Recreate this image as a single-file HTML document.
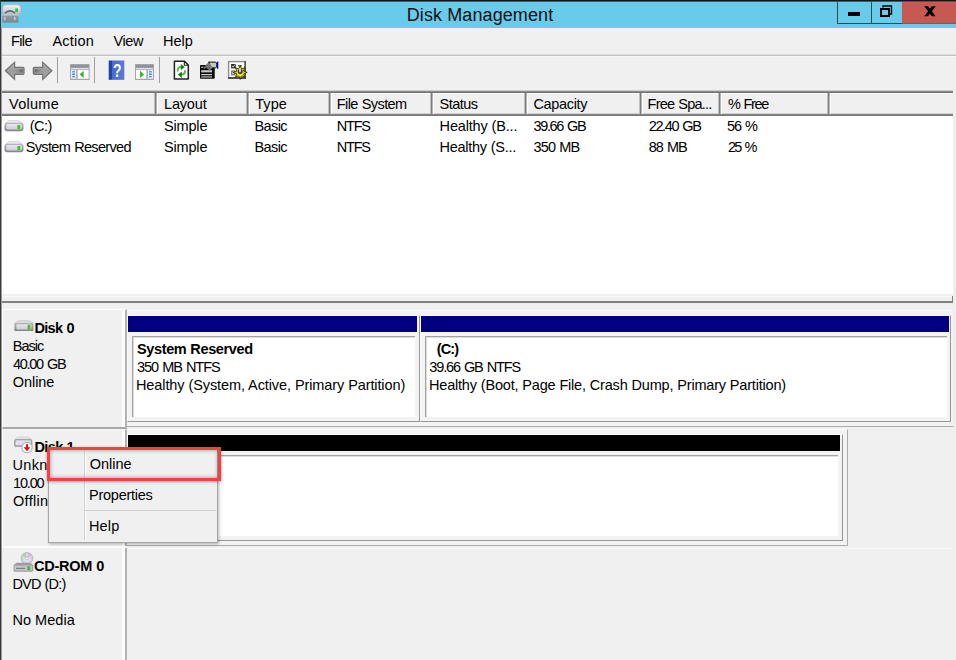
<!DOCTYPE html>
<html>
<head>
<meta charset="utf-8">
<title>Disk Management</title>
<style>
html,body{margin:0;padding:0;}
body{width:956px;height:660px;overflow:hidden;background:#f0f0f0;font-family:"Liberation Sans",sans-serif;font-size:14.5px;color:#000;}
#win{position:relative;width:956px;height:660px;overflow:hidden;background:#f0f0f0;}
.abs{position:absolute;}
.t{position:absolute;white-space:nowrap;line-height:18px;height:18px;letter-spacing:-0.15px;}
.b{font-weight:bold;}
/* title */
#topblack{left:0;top:0;width:956px;height:1px;background:#141414;border-bottom:1px solid #35606e;}
#titlebar{left:0;top:2px;width:956px;height:26px;background:#68cbea;}
#title{left:0;top:3px;width:960px;text-align:center;font-size:18px;line-height:24px;height:24px;color:#111;letter-spacing:0.1px;}
#leftedge{left:0;top:0;width:1px;height:660px;background:#383838;}
#leftedge2{left:1px;top:28px;width:1px;height:632px;background:#9c9c9c;}
.cbtn{position:absolute;top:2px;height:22px;border:1px solid #2c4a55;border-top:none;box-sizing:border-box;}
/* menu */
#menuline{left:2px;top:54px;width:954px;height:1px;background:#dedede;border-bottom:1px solid #c2c2c2;}
#menuline2{left:2px;top:56px;width:954px;height:1px;background:#f7f7f7;}
.tsep{position:absolute;top:57px;width:1px;height:26px;background:#a0a0a0;}
/* list */
#listtop{left:2px;top:90px;width:951px;height:3px;background:linear-gradient(180deg,#cdcdcd 0 1px,#8c8c8c 1px 2px,#727272 2px 3px);}
#list{left:2px;top:93px;width:951px;height:201px;background:#fff;}
#hdr{left:2px;top:93px;width:951px;height:21px;background:#f0f0f0;border-top:1px solid #fff;box-sizing:border-box;}
#hdrbot{left:2px;top:113px;width:951px;height:3px;background:linear-gradient(180deg,#d0d0d0 0 1px,#868686 1px 2px,#767676 2px 3px);}
.hd{position:absolute;top:93px;height:21px;width:4px;background:linear-gradient(90deg,#c0c0c0 0 1px,#7e7e7e 1px 2px,#b4b4b4 2px 3px,#fff 3px 4px);}
/* lower */
#splitlight{left:3px;top:296px;width:950px;height:1px;background:#fafafa;}
#splitdark{left:2px;top:301px;width:951px;height:2px;background:#808080;border-right:0;}
#splitend{left:952px;top:296px;width:1px;height:6px;background:#808080;}
.panel{position:absolute;left:2px;width:125px;background:#f0f0f0;box-sizing:border-box;border-top:1px solid #fdfdfd;border-left:1px solid #fdfdfd;border-right:2px solid #b2b2b2;border-bottom:2px solid #a8a8a8;}
.panel:after{content:"";position:absolute;right:0;top:0;bottom:0;width:3px;background:#fbfbfb;}
.rowf{position:absolute;background:#f3f3f3;box-sizing:border-box;border-top:1px solid #fafafa;border-right:1px solid #ababab;border-bottom:1px solid #ababab;}
.part{position:absolute;background:#f3f3f3;box-sizing:border-box;border-top:1px solid #fcfcfc;border-left:1px solid #fcfcfc;border-right:1px solid #969696;border-bottom:1px solid #969696;}
.navy{position:absolute;background:#000080;}
.pbox{position:absolute;background:#fff;box-sizing:border-box;border-top:1px solid #a2a2a2;border-left:1px solid #a2a2a2;box-shadow:inset 1px 1px 0 #dcdcdc;}
</style>
</head>
<body>
<div id="win">

  <!-- shared icon symbols -->
  <svg width="0" height="0" style="position:absolute">
    <defs>
      <linearGradient id="dface" x1="0" y1="0" x2="0" y2="1"><stop offset="0" stop-color="#fafafc"/><stop offset="0.3" stop-color="#dcdce6"/><stop offset="1" stop-color="#cfcfd8"/></linearGradient>
      <linearGradient id="dbody" x1="0" y1="0" x2="0" y2="1"><stop offset="0" stop-color="#b9b9bd"/><stop offset="1" stop-color="#838388"/></linearGradient>
      <symbol id="drvA" viewBox="0 0 20 12">
        <path d="M4.6 0.6 H15.4 L18.4 3.2 H1.6 Z" fill="#ececee" stroke="#c8c8cc" stroke-width="0.6"/>
        <rect x="0.5" y="2.8" width="19" height="8.4" rx="2.6" fill="url(#dbody)"/>
        <rect x="2.2" y="4.3" width="15.6" height="5.2" rx="1.4" fill="url(#dface)"/>
        <rect x="13.4" y="5" width="2.8" height="4.2" fill="#3cc328"/>
      </symbol>
      <symbol id="drvB" viewBox="0 0 20 12">
        <path d="M4.2 0.6 H15.6 L19 3.2 H0.8 Z" fill="#dcdcde" stroke="#c4c4c8" stroke-width="0.6"/>
        <path d="M0.4 3 H19.4 V11 H0.4 Z" fill="url(#dbody)"/>
        <rect x="2.4" y="4.4" width="15" height="5" rx="0.8" fill="url(#dface)"/>
        <rect x="13.6" y="4.8" width="2.8" height="4.8" fill="#3cc328"/>
      </symbol>
    </defs>
  </svg>
  <!-- title bar -->
  <div class="abs" id="titlebar"></div>
  <div class="abs" id="topblack"></div>
  <div class="abs" id="title">Disk Management</div>
  <!-- app icon -->
  <svg class="abs" style="left:2px;top:4px" width="20" height="20" viewBox="0 0 20 20">
    <defs>
      <linearGradient id="g1" x1="0" y1="0" x2="0" y2="1"><stop offset="0" stop-color="#f4f4f6"/><stop offset="1" stop-color="#b9bdc4"/></linearGradient>
      <linearGradient id="g2" x1="0" y1="0" x2="0" y2="1"><stop offset="0" stop-color="#c9d3da"/><stop offset="0.25" stop-color="#8e9aa3"/><stop offset="1" stop-color="#7c8890"/></linearGradient>
    </defs>
    <rect x="0.5" y="0.8" width="18.5" height="9.6" rx="3.5" fill="url(#g1)" stroke="#a7abb3" stroke-width="0.6"/>
    <path d="M3 9.2 Q8 4.5 13 9.2" fill="none" stroke="#5d666e" stroke-width="1.6"/>
    <rect x="13.3" y="4.4" width="2.6" height="3.6" fill="#2fc21e"/>
    <rect x="0.3" y="10.4" width="16.2" height="8.2" fill="url(#g2)"/>
    <rect x="2.2" y="13" width="1.2" height="3.2" fill="#d5dce0"/>
    <rect x="12.2" y="13" width="1.2" height="3.2" fill="#d5dce0"/>
  </svg>
  <!-- caption buttons -->
  <div class="cbtn" style="left:837px;width:35px;"></div>
  <div class="cbtn" style="left:871px;width:32px;border-left:1px solid #2c4a55;"></div>
  <div class="abs" style="left:902px;top:2px;width:54px;height:22px;background:#c75a50;box-shadow:inset 0 -1px 0 #a84a42;"></div>
  <div class="abs" style="left:848px;top:12px;width:12px;height:4px;background:#000;"></div>
  <svg class="abs" style="left:879px;top:4px" width="15" height="15" viewBox="0 0 15 15">
    <path d="M4 3.5 V2 H12.5 V10 H11" fill="none" stroke="#000" stroke-width="1.4"/>
    <rect x="2" y="5" width="8" height="7" fill="none" stroke="#000" stroke-width="2"/>
  </svg>
  <svg class="abs" style="left:923px;top:5px" width="14" height="13" viewBox="0 0 14 13">
    <path d="M1.2 1.2 H5 L12.7 11.2 H8.9 Z" fill="#000"/><path d="M12.7 1.2 H8.9 L1.2 11.2 H5 Z" fill="#000"/>
  </svg>

  <!-- menu bar -->
  <div class="t" style="left:11.1px;top:32px;letter-spacing:-0.66px;word-spacing:0.66px;">File</div>
  <div class="t" style="left:52.4px;top:32px;letter-spacing:0.21px;word-spacing:-0.21px;">Action</div>
  <div class="t" style="left:113.4px;top:32px;letter-spacing:-0.36px;word-spacing:0.36px;">View</div>
  <div class="t" style="left:162.9px;top:32px;letter-spacing:0.06px;word-spacing:-0.06px;">Help</div>
  <div class="abs" id="menuline"></div>
  <div class="abs" id="menuline2"></div>

  <!-- toolbar -->
  <svg class="abs" style="left:0;top:56px" width="260" height="34" viewBox="0 0 260 34">
    <defs>
      <linearGradient id="ga" x1="0" y1="0" x2="0" y2="1"><stop offset="0" stop-color="#b8b8b8"/><stop offset="0.5" stop-color="#9c9c9c"/><stop offset="1" stop-color="#aaaaaa"/></linearGradient>
      <linearGradient id="gb" x1="0" y1="0" x2="1" y2="0"><stop offset="0" stop-color="#8a8a8a" stop-opacity="0"/><stop offset="1" stop-color="#5e5e5e" stop-opacity="0.9"/></linearGradient>
      <linearGradient id="gc" x1="1" y1="0" x2="0" y2="0"><stop offset="0" stop-color="#8a8a8a" stop-opacity="0"/><stop offset="1" stop-color="#5e5e5e" stop-opacity="0.9"/></linearGradient>
      <linearGradient id="gh" x1="0" y1="0" x2="1" y2="0"><stop offset="0" stop-color="#2443a8"/><stop offset="0.22" stop-color="#2443a8"/><stop offset="0.23" stop-color="#4a6ad0"/><stop offset="1" stop-color="#5878dc"/></linearGradient>
    </defs>
    <!-- back arrow -->
    <path d="M5.4 14.8 L14.6 6.3 V11.3 H23 Q24 11.3 24 12.3 V17.3 Q24 18.3 23 18.3 H14.6 V23.3 Z" fill="url(#ga)" stroke="#727272" stroke-width="1.2"/>
    <rect x="14" y="13" width="8.6" height="3.6" fill="url(#gb)"/>
    <!-- forward arrow -->
    <path d="M51.9 14.8 L42.7 6.3 V11.3 H34.3 Q33.3 11.3 33.3 12.3 V17.3 Q33.3 18.3 34.3 18.3 H42.7 V23.3 Z" fill="url(#ga)" stroke="#727272" stroke-width="1.2"/>
    <rect x="34.6" y="13" width="8.6" height="3.6" fill="url(#gc)"/>
    <!-- window icon 1 -->
    <g>
      <rect x="70" y="8" width="19.6" height="16" fill="#a1a6ae"/>
      <rect x="71" y="9" width="17.6" height="2.6" fill="#8f949c"/>
      <rect x="71" y="12.2" width="17.6" height="1" fill="#f2f3f5"/>
      <rect x="71" y="14" width="5.2" height="8.8" fill="#e4ebf6"/>
      <rect x="72.2" y="15.2" width="2.8" height="1.2" fill="#4f86d8"/>
      <rect x="72.2" y="17.6" width="2.8" height="1.2" fill="#2f6fd0"/>
      <rect x="72.2" y="20" width="2.8" height="1.2" fill="#4f86d8"/>
      <rect x="77.6" y="14" width="11" height="8.8" fill="#fff"/>
      <path d="M79.6 18.4 L83.6 14.8 V22 Z" fill="#3cb521"/>
    </g>
    <!-- help icon -->
    <rect x="108.7" y="4.5" width="15.6" height="19.3" fill="url(#gh)"/>
    <text transform="translate(117.2 20.8) scale(0.8 1)" x="0" y="0" font-family="Liberation Sans, sans-serif" font-weight="bold" font-size="17.5" fill="#fff" text-anchor="middle">?</text>
    <!-- window icon 2 -->
    <g>
      <rect x="135" y="8" width="19" height="16" fill="#a1a6ae"/>
      <rect x="136" y="9" width="17" height="2.6" fill="#8f949c"/>
      <rect x="136" y="12.2" width="17" height="1" fill="#f2f3f5"/>
      <rect x="136" y="14" width="10.4" height="8.8" fill="#fff"/>
      <path d="M144.2 18.4 L140 14.8 V22 Z" fill="#3cb521"/>
      <rect x="147.8" y="14" width="5.2" height="8.8" fill="#e4ebf6"/>
      <rect x="149" y="15.2" width="2.8" height="1.2" fill="#4f86d8"/>
      <rect x="149" y="17.6" width="2.8" height="1.2" fill="#2f6fd0"/>
      <rect x="149" y="20" width="2.8" height="1.2" fill="#4f86d8"/>
    </g>
    <!-- refresh doc -->
    <path d="M174.4 5.2 H184.5 L188.3 9 V23.1 H174.4 Z" fill="#fff" stroke="#222" stroke-width="1.5" stroke-linejoin="round"/>
    <path d="M184.3 5.4 V9.2 H188.1 Z" fill="#fff" stroke="#222" stroke-width="1.1" stroke-linejoin="round"/>
    <path d="M181.2 11 Q177.5 10.8 177.6 15.4" fill="none" stroke="#45b045" stroke-width="1.7"/>
    <path d="M180.8 7.9 L184.6 11.1 L180.8 14.2 Z" fill="#078207"/>
    <path d="M181.4 18.6 Q185.1 18.8 185 14.2" fill="none" stroke="#45b045" stroke-width="1.7"/>
    <path d="M181.9 15.4 L177.9 18.6 L181.9 21.9 Z" fill="#078207"/>
    <!-- properties icon -->
    <rect x="200" y="9.1" width="14.7" height="13.6" rx="0.8" fill="#070707"/>
    <rect x="201.2" y="14.2" width="10.8" height="2.2" fill="#c9c9c9"/>
    <rect x="201.2" y="18.1" width="10.8" height="1.1" fill="#e6e6e6"/>
    <rect x="201.2" y="20.4" width="10.8" height="1.1" fill="#d0d0d0"/>
    <rect x="201" y="10.6" width="2.4" height="1.2" fill="#bdbdbd"/>
    <path d="M208.4 6.1 H215.2 Q216.9 6.1 216.9 9 Q216.9 11.9 215.2 11.9 H211.5 Z" fill="#c6c6c6" stroke="#0a0a0a" stroke-width="1"/>
    <path d="M203.4 12 L208.2 6.6 L212.6 11.4 L209.6 14.6 L206.2 11.4 L204.4 13 Z" fill="#7c7c7c"/>
    <path d="M206.4 8.6 L210.8 13.2 M205.2 10 L209.6 14.4" stroke="#5c5c5c" stroke-width="0.9"/>
    <rect x="216.9" y="5.6" width="1.4" height="7.2" fill="#0a0ab4"/>
    <!-- settings icon -->
    <rect x="228.6" y="5.6" width="16.6" height="16.4" fill="#fdfdfd" stroke="#8e8e8e" stroke-width="1.4"/>
    <rect x="244.4" y="5" width="1.6" height="17.6" fill="#555"/>
    <rect x="228" y="21.2" width="18" height="1.6" fill="#3c3c3c"/>
    <rect x="231.1" y="8" width="4.7" height="4.4" fill="#2e2e2e"/>
    <path d="M232 10 L233 11.2 L235 8.6" stroke="#ddd" stroke-width="0.9" fill="none"/>
    <rect x="238" y="9" width="4" height="1.5" fill="#777"/>
    <rect x="231.1" y="14.4" width="4.2" height="5" fill="#6e6e6e"/>
    <rect x="232.2" y="15.6" width="1.8" height="2.6" fill="#cfcfcf"/>
    <path d="M240.2 23.4 L238.8 19.7 L235.3 21.3 L236.9 17.8 L233.2 16.4 L236.9 15.0 L235.3 11.5 L238.8 13.1 L240.2 9.4 L241.6 13.1 L245.1 11.5 L243.5 15.0 L247.2 16.4 L243.5 17.8 L245.1 21.3 L241.6 19.7 Z" fill="#e9e214" stroke="#2c2a00" stroke-width="0.9" stroke-linejoin="round"/>
    <circle cx="240.2" cy="15.4" r="2.5" fill="#3a3a3a"/>
    <rect x="239.2" y="12.2" width="1.6" height="4" fill="#e8e8e8"/>
    <path d="M236.6 16.2 Q240.2 21.4 243.9 16.4 L243 18.8 Q240.2 21.6 237.4 18.8 Z" fill="#f4ee2a"/>
  </svg>
  <div class="tsep" style="left:57px;"></div>
  <div class="tsep" style="left:94px;"></div>
  <div class="tsep" style="left:159px;"></div>

  <!-- volume list -->
  <div class="abs" id="list"></div>
  <div class="abs" id="hdr"></div>
  <div class="abs" id="listtop"></div>
  <div class="abs" id="hdrbot"></div>
  <div class="hd" style="left:154px"></div>
  <div class="hd" style="left:246px"></div>
  <div class="hd" style="left:328px"></div>
  <div class="hd" style="left:430px"></div>
  <div class="hd" style="left:524px"></div>
  <div class="hd" style="left:639px"></div>
  <div class="hd" style="left:718px"></div>
  <div class="hd" style="left:827px"></div>

  <div class="t" style="left:9.0px;top:95px;letter-spacing:0.282px;word-spacing:-0.282px;">Volume</div>
  <div class="t" style="left:164.0px;top:95px;letter-spacing:-0.168px;word-spacing:0.168px;">Layout</div>
  <div class="t" style="left:255.2px;top:95px;letter-spacing:0.09px;word-spacing:-0.09px;">Type</div>
  <div class="t" style="left:336.8px;top:95px;letter-spacing:-0.598px;word-spacing:0.598px;">File System</div>
  <div class="t" style="left:439.5px;top:95px;letter-spacing:-0.528px;word-spacing:0.528px;">Status</div>
  <div class="t" style="left:533.5px;top:95px;letter-spacing:-0.355px;word-spacing:0.355px;">Capacity</div>
  <div class="t" style="left:647.6px;top:95px;letter-spacing:-0.779px;word-spacing:0.779px;">Free Spa...</div>
  <div class="t" style="left:728.0px;top:95px;letter-spacing:-1.329px;word-spacing:1.329px;">% Free</div>

  <svg class="abs" style="left:4px;top:120px" width="20" height="12"><use href="#drvA"/></svg>
  <svg class="abs" style="left:4px;top:141px" width="20" height="12"><use href="#drvA"/></svg>
  <!-- row 1 -->
  <div class="t" style="left:29.7px;top:117px;letter-spacing:-0.51px;word-spacing:0.51px;">(C:)</div>
  <div class="t" style="left:164.0px;top:117px;letter-spacing:-0.168px;word-spacing:0.168px;">Simple</div>
  <div class="t" style="left:254.6px;top:117px;letter-spacing:-0.645px;word-spacing:0.645px;">Basic</div>
  <div class="t" style="left:336.8px;top:117px;letter-spacing:-1.23px;word-spacing:1.23px;">NTFS</div>
  <div class="t" style="left:439.6px;top:117px;letter-spacing:-0.178px;word-spacing:0.178px;">Healthy (B...</div>
  <div class="t" style="left:533.5px;top:117px;letter-spacing:-1.347px;word-spacing:1.347px;">39.66 GB</div>
  <div class="t" style="left:648.7px;top:117px;letter-spacing:-1.349px;word-spacing:1.349px;">22.40 GB</div>
  <div class="t" style="left:727.0px;top:117px;letter-spacing:-1.08px;word-spacing:1.08px;">56 %</div>
  <!-- row 2 -->
  <div class="t" style="left:25.8px;top:138px;letter-spacing:-0.673px;word-spacing:0.673px;">System Reserved</div>
  <div class="t" style="left:164.0px;top:138px;letter-spacing:-0.168px;word-spacing:0.168px;">Simple</div>
  <div class="t" style="left:254.6px;top:138px;letter-spacing:-0.645px;word-spacing:0.645px;">Basic</div>
  <div class="t" style="left:336.8px;top:138px;letter-spacing:-1.23px;word-spacing:1.23px;">NTFS</div>
  <div class="t" style="left:439.6px;top:138px;letter-spacing:-0.283px;word-spacing:0.283px;">Healthy (S...</div>
  <div class="t" style="left:533.5px;top:138px;letter-spacing:-0.836px;word-spacing:0.836px;">350 MB</div>
  <div class="t" style="left:648.7px;top:138px;letter-spacing:-0.939px;word-spacing:0.939px;">88 MB</div>
  <div class="t" style="left:728.0px;top:138px;letter-spacing:-1.83px;word-spacing:1.83px;">25 %</div>

  <!-- splitter -->
  <div class="abs" id="splitlight"></div>
  <div class="abs" id="splitdark"></div>
  <div class="abs" id="splitend"></div>

  <!-- Disk 0 -->
  <div class="panel" style="top:309px;height:120px;"></div>
  <svg class="abs" style="left:13.5px;top:319.5px" width="20" height="12"><use href="#drvB"/></svg>
  <div class="t b" style="left:34.4px;top:319px;letter-spacing:-0.645px;word-spacing:0.645px;">Disk 0</div>
  <div class="t" style="left:12.8px;top:337px;letter-spacing:-0.986px;word-spacing:0.986px;">Basic</div>
  <div class="t" style="left:13.0px;top:355px;letter-spacing:-1.281px;word-spacing:1.281px;">40.00 GB</div>
  <div class="t" style="left:12.8px;top:373px;letter-spacing:-0.078px;word-spacing:0.078px;">Online</div>

  <div class="rowf" style="left:127px;top:310px;width:827px;height:117px;border-right-color:#ececec;"></div>
  <div class="part" style="left:127px;top:315px;width:293px;height:107px;"></div>
  <div class="part" style="left:420px;top:315px;width:531px;height:107px;"></div>
  <div class="navy" style="left:128px;top:316px;width:289.4px;height:16px;"></div>
  <div class="navy" style="left:421px;top:316px;width:528px;height:16px;"></div>
  <div class="pbox" style="left:132px;top:336px;width:283px;height:81px;"></div>
  <div class="pbox" style="left:425px;top:336px;width:522px;height:81px;"></div>
  <div class="t b" style="left:137.0px;top:340px;letter-spacing:-0.375px;word-spacing:0.375px;">System Reserved</div>
  <div class="t" style="left:137.0px;top:358px;letter-spacing:-1.024px;word-spacing:1.024px;">350 MB NTFS</div>
  <div class="t" style="left:136.0px;top:376px;letter-spacing:-0.103px;word-spacing:0.103px;">Healthy (System, Active, Primary Partition)</div>
  <div class="t b" style="left:436.7px;top:340px;letter-spacing:-0.87px;word-spacing:0.87px;">(C:)</div>
  <div class="t" style="left:429.3px;top:358px;letter-spacing:-1.134px;word-spacing:1.134px;">39.66 GB NTFS</div>
  <div class="t" style="left:429.0px;top:376px;letter-spacing:-0.199px;word-spacing:0.199px;">Healthy (Boot, Page File, Crash Dump, Primary Partition)</div>

  <!-- Disk 1 -->
  <div class="panel" style="top:429px;height:117px;border-bottom:none;border-top-color:#f4f4f4;"></div>
  <svg class="abs" style="left:13px;top:436px" width="22" height="18" viewBox="0 0 22 18">
    <path d="M5 1 H15.4 L18.6 3.4 H1.6 Z" fill="#e4e4e6" stroke="#c8c8cc" stroke-width="0.6"/>
    <rect x="1" y="3" width="18.4" height="8" rx="2.6" fill="#a4a4aa"/>
    <rect x="2.6" y="4.3" width="15.2" height="5" rx="1.4" fill="#e0e0ea"/>
    <circle cx="14" cy="11.6" r="5.2" fill="#fff" stroke="#b4b4b4" stroke-width="1.1"/>
    <path d="M12.9 8.2 H15.1 V11.2 H17.4 L14 15.2 L10.6 11.2 H12.9 Z" fill="#d5121b"/>
  </svg>
  <div class="t b" style="left:34.5px;top:438px;letter-spacing:-0.646px;word-spacing:0.646px;">Disk 1</div>
  <div class="t" style="left:12.6px;top:456px;letter-spacing:0.3px;">Unknown</div>
  <div class="t" style="left:13px;top:474px;letter-spacing:-1.15px;word-spacing:5px;">10.00 GB</div>
  <div class="t" style="left:13px;top:492px;letter-spacing:0.3px;">Offline</div>
  <div class="rowf" style="left:127px;top:429px;width:721px;height:117px;"></div>
  <div class="part" style="left:127px;top:434px;width:716px;height:107px;"></div>
  <div class="abs" style="left:128px;top:435.3px;width:712.3px;height:15.7px;background:#000;"></div>
  <div class="pbox" style="left:132px;top:455px;width:706px;height:81px;"></div>

  <!-- CD-ROM 0 -->
  <div class="abs" style="left:2px;top:546px;width:124px;height:2px;background:#fcfcfc;"></div>
  <div class="abs" style="left:127px;top:548px;width:826px;height:1px;background:#fafafa;"></div>
  <div class="abs" style="left:122px;top:547px;width:3px;height:113px;background:#fbfbfb;"></div>
  <div class="abs" style="left:125px;top:548px;width:2px;height:112px;background:#b2b2b2;"></div>
  <svg class="abs" style="left:13px;top:552px" width="21" height="21" viewBox="0 0 21 21">
    <defs><radialGradient id="cdg" cx="0.5" cy="0.5" r="0.5"><stop offset="0" stop-color="#ffffff"/><stop offset="0.25" stop-color="#e8e8f0"/><stop offset="1" stop-color="#c9c9d4"/></radialGradient></defs>
    <circle cx="14" cy="6.4" r="5.9" fill="url(#cdg)" stroke="#b0b0ba" stroke-width="0.7"/>
    <path d="M14 6.4 L9.4 3.4 A5.6 5.6 0 0 1 12 1.2 Z" fill="#7fe07a" opacity="0.8"/>
    <path d="M14 6.4 L15.6 1 A5.6 5.6 0 0 1 18.4 3 Z" fill="#f09ad8" opacity="0.75"/>
    <circle cx="14" cy="6.4" r="1.5" fill="#f4f4f4" stroke="#a8a8b0" stroke-width="0.6"/>
    <path d="M3.4 10.8 H17.4 L20.2 13.2 V18.4 Q20.2 19.8 18.8 19.8 H2 Q0.6 19.8 0.6 18.4 V13.2 Z" fill="#9c9ca2"/>
    <rect x="1.6" y="13.4" width="17.6" height="5.2" rx="1" fill="#c4c4cc"/>
    <rect x="3" y="15.8" width="9" height="1.2" fill="#7e7e86"/>
    <rect x="14.4" y="14.2" width="2.8" height="3.8" fill="#3cc328"/>
  </svg>
  <div class="t b" style="left:34.0px;top:557px;letter-spacing:-0.249px;word-spacing:0.249px;">CD-ROM 0</div>
  <div class="t" style="left:12.4px;top:575px;letter-spacing:-0.81px;word-spacing:0.81px;">DVD (D:)</div>
  <div class="t" style="left:12.4px;top:611px;letter-spacing:0.065px;word-spacing:-0.065px;">No Media</div>

  <!-- context menu -->
  <div class="abs" style="left:48px;top:448px;width:170px;height:95px;background:#f0f0f0;border:1px solid #a6a6a6;box-sizing:border-box;box-shadow:1px 1px 3px rgba(0,0,0,0.28);"></div>
  <div class="abs" style="left:84px;top:451px;width:1px;height:89px;background:#d0d0d0;"></div>
  <div class="abs" style="left:85px;top:451px;width:1px;height:89px;background:#fcfcfc;"></div>
  <div class="abs" style="left:85px;top:479px;width:131px;height:1px;background:#d0d0d0;"></div>
  <div class="abs" style="left:85px;top:510px;width:131px;height:1px;background:#d0d0d0;"></div>
  <div class="t" style="left:89.7px;top:455px;letter-spacing:0.012px;word-spacing:-0.012px;">Online</div>
  <div class="t" style="left:89.0px;top:486px;letter-spacing:-0.25px;word-spacing:0.25px;">Properties</div>
  <div class="t" style="left:89.0px;top:517px;letter-spacing:0.15px;word-spacing:-0.15px;">Help</div>
  <div class="abs" style="left:47px;top:447px;width:174px;height:34px;border:3px solid #f5403f;box-sizing:border-box;box-shadow:0 1px 3px rgba(0,0,0,0.3), inset 0 0 4px rgba(0,0,0,0.4);"></div>

  <div class="abs" id="leftedge"></div>
  <div class="abs" id="leftedge2"></div>
</div>
</body>
</html>
